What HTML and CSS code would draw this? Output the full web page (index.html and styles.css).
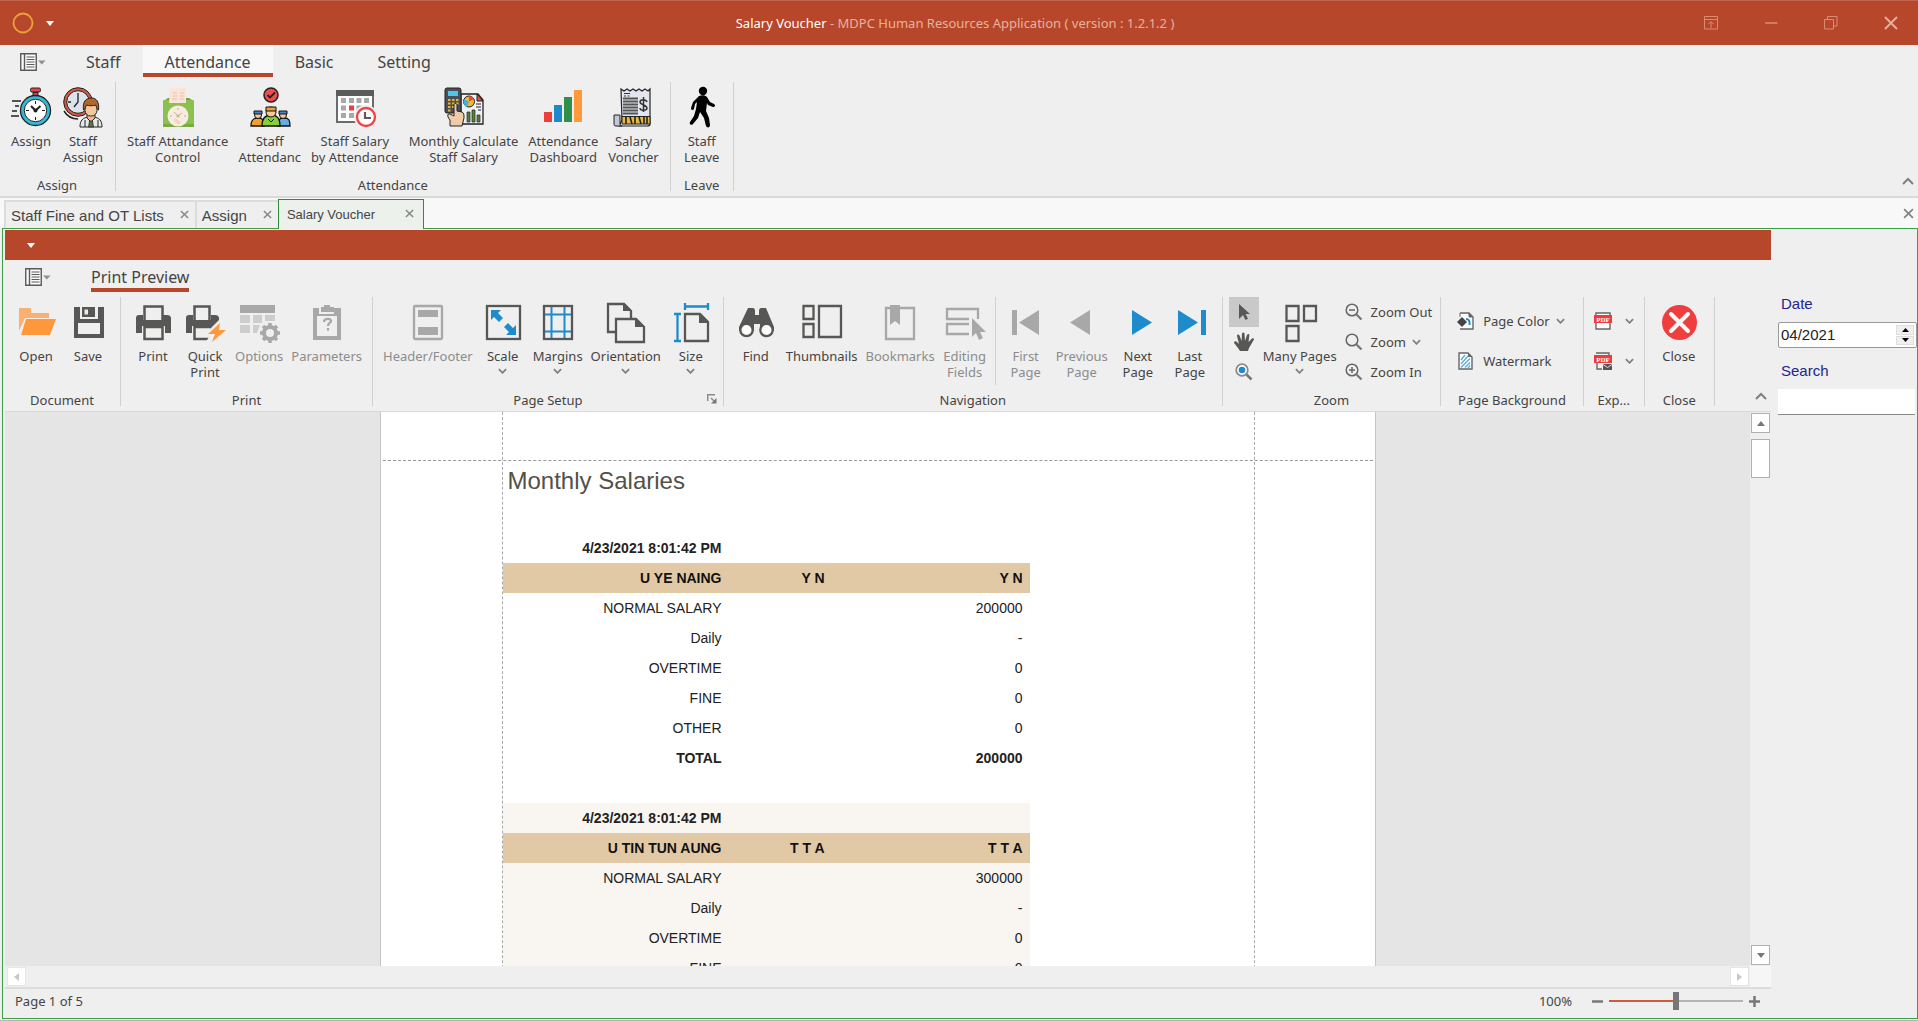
FILE: index.html
```html
<!DOCTYPE html>
<html lang="en">
<head>
<meta charset="utf-8">
<title>Salary Voucher - MDPC Human Resources Application</title>
<link rel="stylesheet" href="styles.css">
</head>
<body>
<svg class="defs" aria-hidden="true">
  <symbol id="chevron" viewBox="0 0 10 6"><path d="M1 1l4 4 4-4" fill="none" stroke="#808080" stroke-width="2"/></symbol>
  <symbol id="close" viewBox="0 0 10 10"><path d="M1 1l8 8M9 1L1 9" fill="none" stroke="#858585" stroke-width="1.6"/></symbol>
  <symbol id="caret-up" viewBox="0 0 12 8"><path d="M1 7l5-5 5 5" fill="none" stroke="#808080" stroke-width="2"/></symbol>
  <symbol id="appmenu" viewBox="0 0 26 18">
    <path d="M.75.75h15.5v16.5H.75zM4.5 1v16" fill="#fafafa" stroke="#5a5a5a" stroke-width="1.4"/>
    <path d="M6.500 4h8M6.500 6.500h8M6.500 9h8M6.500 11.500h8M6.500 14h8" stroke="#5a5a5a" stroke-width="1.2"/>
    <path d="M18 7.500h7.500l-3.750 4z" fill="#909090"/>
  </symbol>
</svg>
<div class="app">
  <header class="titlebar">
    <div class="quick">
      <svg width="22" height="22" viewBox="0 0 22 22"><circle cx="11" cy="11" r="9.500" fill="none" stroke="#e8a33a" stroke-width="1.800"/></svg>
      <svg width="8" height="5" viewBox="0 0 8 5"><path d="M0 0h8L4 5z" fill="#fff"/></svg>
    </div>
    <div class="caption-text"><b>Salary Voucher</b> - MDPC Human Resources Application ( version : 1.2.1.2 )</div>
    <div class="winbuttons">
      <button type="button" aria-label="Ribbon options"><svg width="14" height="14" viewBox="0 0 14 14"><path d="M.5.5h13v12.500H.5zM.5 3.500h13M7 12V6M4.500 8L7 5.500 9.500 8" fill="none" stroke="#d98b76"/></svg></button>
      <button type="button" aria-label="Minimize"><svg width="14" height="14" viewBox="0 0 14 14"><path d="M1 7h12.500" stroke="#d98b76" stroke-width="1.500"/></svg></button>
      <button type="button" aria-label="Restore"><svg width="14" height="14" viewBox="0 0 14 14"><path d="M.5 3.500h9v9.500h-9zM3.500 3.500V.5h9.500v9.500H9.500" fill="none" stroke="#d98b76"/></svg></button>
      <button type="button" aria-label="Close window"><svg width="14" height="14" viewBox="0 0 14 14"><path d="M1 1l12 12M13 1L1 13" stroke="#e9b0a0" stroke-width="1.800"/></svg></button>
    </div>
  </header>

  <nav class="tabs">
    <button type="button" class="appmenu" aria-label="Application menu"><svg width="26" height="18"><use href="#appmenu"/></svg></button>
    <button type="button" class="tab"><span>Staff</span></button>
    <button type="button" class="tab active"><span>Attendance</span></button>
    <button type="button" class="tab"><span>Basic</span></button>
    <button type="button" class="tab"><span>Setting</span></button>
  </nav>
  <section class="ribbon">
    <div class="group">
      <div class="items">
        <button type="button" class="big">
          <svg viewBox="0 0 40 40">
            <path d="M1 14h9M4 19h4M1 24h5M0 29h8" stroke="#222" stroke-width="1.300"/>
            <rect x="19.500" y="1" width="10" height="4" rx="1.500" fill="#e8434a" stroke="#222"/><path d="M22 5.500h5v3h-5z" fill="#e8434a" stroke="#222"/>
            <circle cx="24.500" cy="23.500" r="15" fill="#35b8d6" stroke="#222" stroke-width="1.300"/>
            <circle cx="24.500" cy="23.500" r="11.200" fill="#fff" stroke="#222"/>
            <path d="M24.500 14v3M24.500 30v3M15 23.500h3M31 23.500h3" stroke="#222"/>
            <path d="M20 19l4.500 4.500 5-4.500" fill="none" stroke="#222" stroke-width="2"/><circle cx="24.500" cy="23.500" r="2" fill="#222"/>
          </svg><span>Assign</span></button>
        <button type="button" class="big">
          <svg viewBox="0 0 40 40">
            <path d="M1 24c3 5 8 8 14 8" fill="none" stroke="#222" stroke-width="1.500"/>
            <circle cx="15" cy="15" r="14.300" fill="#d8573f" stroke="#222"/><circle cx="15" cy="15" r="11.300" fill="#dde3ec" stroke="#222"/>
            <path d="M15 6v9l-4 5M5 15h3M22 15h3" fill="none" stroke="#222" stroke-width="1.300"/>
            <path d="M17 40c0-7 3-9 8-10h6c5 1 8 3 8 10z" fill="#e6e8ee" stroke="#222"/>
            <path d="M24 26h8v5l-4 4-4-4z" fill="#e9b98f" stroke="#222"/><path d="M26.500 34h3l1 6h-5z" fill="#58733f" stroke="#222" stroke-width=".7"/>
            <rect x="22" y="15" width="12" height="14" rx="5.500" fill="#f4c79c" stroke="#222"/>
            <path d="M20.500 23c-1-8 2-12 8-12 5 0 8 4 7 12-2-1-2-4-3-5-3 1-6 1-9 0-1 2-1 4-3 5z" fill="#b0662d" stroke="#222"/>
            <path d="M22 33v7M35 33v7" stroke="#222"/>
          </svg><span>Staff<br>Assign</span></button>
      </div>
      <div class="caption">Assign</div>
    </div>
    <div class="group compact">
      <div class="items">
        <button type="button" class="big">
          <svg viewBox="0 0 40 40">
            <path d="M7 13l3-2h21l3 2z" fill="#7aa52e"/><rect x="5" y="13" width="31" height="27" rx="1" fill="#8cc152"/>
            <path d="M5 37h31v3H5z" fill="#79ab42"/>
            <path d="M12 2l2-2 3 2 3-2 3 2 3-2 2 2v14H11z" fill="#fbe3d6"/><path d="M15 6h4M22 6h4M15 9h4M22 9h4M14 12h5M22 12h4" stroke="#e9bfae"/>
            <circle cx="20" cy="29" r="10.500" fill="#f8ebdf"/>
            <path d="M20 21v2M20 35v2M12 29h2M26 29h2M16 25l4 4 4-3" fill="none" stroke="#c9b09d"/><circle cx="20" cy="29" r="1.500" fill="#c9b09d"/><path d="M17 31a3 3 0 006 4z" fill="#f2d4c0"/>
          </svg><span>Staff Attandance<br>Control</span></button>
        <button type="button" class="big">
          <svg viewBox="0 0 40 40">
            <circle cx="21" cy="8" r="7" fill="#f04d4d" stroke="#222" stroke-width="1.500"/><path d="M17.500 8l2.500 2.500L25 5.500" fill="none" stroke="#222" stroke-width="1.800"/>
            <path d="M1 39c0-6 2-8 7-8s6 2 6 8z" fill="#f6a02c" stroke="#111" stroke-width="1.300"/>
            <path d="M28 39c0-6 1-8 6-8s6 2 6 8z" fill="#63aee8" stroke="#111" stroke-width="1.300"/>
            <circle cx="8" cy="28" r="3.500" fill="#f6c89a" stroke="#111"/><path d="M4 27v-3h8v3z" fill="#4789c8" stroke="#111"/>
            <circle cx="33" cy="28" r="3.500" fill="#f6c89a" stroke="#111"/><path d="M29 27v-3h8v3z" fill="#4789c8" stroke="#111"/>
            <path d="M12 39c0-8 3-11 9-11s9 3 9 11z" fill="#86cf3d" stroke="#111" stroke-width="1.300"/>
            <circle cx="21" cy="25" r="5" fill="#f6c89a" stroke="#111"/><path d="M16 24v-4h10v4z" fill="#e8a036" stroke="#111"/><path d="M18 32l3 3 3-3" fill="none" stroke="#111"/>
          </svg><span>Staff<br>Attendanc</span></button>
        <button type="button" class="big">
          <svg viewBox="0 0 40 40">
            <rect x="2" y="4" width="36" height="31" fill="#fff" stroke="#6b6b6b" stroke-width="2"/><path d="M1 3h38v6H1z" fill="#5b5b5b"/>
            <path d="M6 11h5v5H6zM14 11h5v5h-5zM21.500 11h5v5h-5zM29 11h5v5h-5zM6 18.500h5v5H6zM21.500 18.500h5v5h-5zM6 26h5v5H6zM14 26h5v5h-5z" fill="#a8a8a8"/>
            <path d="M14 18.500h5v5h-5z" fill="#ee3b3b"/>
            <circle cx="31" cy="30" r="12" fill="#efefef"/><circle cx="31" cy="30" r="9" fill="#fff" stroke="#ee4444" stroke-width="2.300"/><path d="M30 25v6h6" fill="none" stroke="#5b5b5b" stroke-width="2.200"/>
          </svg><span>Staff Salary<br>by Attendance</span></button>
        <button type="button" class="big">
          <svg viewBox="0 0 40 40">
            <path d="M17 7h17l5 6v24H17z" fill="#f0f1f6" stroke="#222" stroke-width="1.300"/><path d="M33 7v7h6z" fill="#ee4b3a" stroke="#222"/>
            <circle cx="25" cy="14.500" r="5.500" fill="#f5b431" stroke="#222"/><path d="M25 14.500V9a5.500 5.500 0 015 3z" fill="#e54b3c"/><path d="M25 14.500l-5-2a5.500 5.500 0 003 7.500z" fill="#3bb3e0"/>
            <path d="M32 17h5M32 20h5M34 23h3" stroke="#222"/>
            <path d="M23 25h3v10h-3zM28 23h3v12h-3zM33 28h3v7h-3z" fill="#5d8038" stroke="#222" stroke-width=".7"/>
            <rect x="1" y="1" width="16" height="25" rx="2" fill="#4b4e56" stroke="#222"/><path d="M4 4h10v5H4z" fill="#4cc6ee"/>
            <path d="M4 13h2.500M8 13h2.500M12 13h2.500M4 16.500h2.500M8 16.500h2.500M12 16.500h2.500M4 20h2.500M8 20h2.500M4 23.500h2.500" stroke="#e2b63a" stroke-width="2"/>
            <path d="M6 39v-6c-3-3-3-7 0-6l4 2V18c0-2 3-2 3 0v6l5 1c2 1 2 3 2 6l-2 8z" fill="#f0cbaa" stroke="#222"/>
          </svg><span>Monthly Calculate<br>Staff Salary</span></button>
        <button type="button" class="big">
          <svg viewBox="0 0 40 40"><path d="M1 25h8v10H1z" fill="#ee3e3a"/><path d="M11 18h8v17h-8z" fill="#1e88cc"/><path d="M21 10h8v25h-8z" fill="#2f9149"/><path d="M31 3h8v32h-8z" fill="#ff993c"/></svg><span>Attendance<br>Dashboard</span></button>
        <button type="button" class="big">
          <svg viewBox="0 0 40 40">
            <path d="M8 2l3 2 3-2 3 2 3-2 3 2 3-2 3 2 3-2 3 2 2-2v35c0 2-1 2-3 2H6l3-6z" fill="#e3e6ef" stroke="#222" stroke-width="1.200"/>
            <path d="M11 9h2M14.500 9h2M11 6.500h6" stroke="#333"/>
            <path d="M10 11.500h15M10 14.500h15M10 17.500h15M10 20.500h15M10 23.500h15M10 26.500h15" stroke="#555" stroke-width="1.800"/>
            <path d="M34 15c-1-3-7-3-7 0s7 3 7 6-7 3-7 0M30.500 10v15" fill="none" stroke="#333" stroke-width="1.500"/>
            <path d="M9 29.500h28V37H9z" fill="#e6b93c" stroke="#222"/><path d="M13 30v7M17 30l2 7M22 30v7M26 30l2 7M31 30v7M34 30v7" stroke="#222" stroke-width="1.600"/>
            <path d="M1 28h6v9c0 2 2 2 2 2H3c-2 0-2-1-2-3z" fill="#c3c8d8" stroke="#222"/>
          </svg><span>Salary<br>Voncher</span></button>
      </div>
      <div class="caption">Attendance</div>
    </div>
    <div class="group compact">
      <div class="items">
        <button type="button" class="big">
          <svg viewBox="0 0 40 40"><circle cx="21" cy="4" r="4.200"/><path d="M17 9c3-1 6-1 8 1l3 5 4 2c2 1 1 3-1 3l-5-2-1-2-1 8 3 7 1 7c0 3-3 3-4 1l-2-8-4-6-2 6-5 6c-2 2-4 0-3-2l4-6 2-7 1-7-2 2-1 5c-1 2-3 1-3-1l2-6z"/></svg><span>Staff<br>Leave</span></button>
      </div>
      <div class="caption">Leave</div>
    </div>
    <button type="button" class="collapse" aria-label="Collapse ribbon"><svg width="12" height="8"><use href="#caret-up"/></svg></button>
  </section>

  <nav class="doctabs">
    <button type="button" class="doctab">Staff Fine and OT Lists<svg width="9" height="9"><use href="#close"/></svg></button>
    <button type="button" class="doctab">Assign<svg width="9" height="9"><use href="#close"/></svg></button>
    <button type="button" class="doctab current">Salary Voucher<svg width="9" height="9"><use href="#close"/></svg></button>
    <button type="button" class="closeall" aria-label="Close tab"><svg width="11" height="11"><use href="#close"/></svg></button>
  </nav>

  <main class="frame">
    <div class="preview">
      <div class="redbar"><svg width="8" height="5" viewBox="0 0 8 5"><path d="M0 0h8L4 5z" fill="#fff"/></svg></div>
      <nav class="tabs">
        <button type="button" class="appmenu" aria-label="Print menu"><svg width="26" height="18"><use href="#appmenu"/></svg></button>
        <button type="button" class="tab underlined"><span>Print Preview</span></button>
      </nav>
      <section class="ribbon print">
        <div class="group">
          <div class="items">
            <button type="button" class="big"><svg viewBox="0 0 40 40"><path d="M3 6h12v5h18v5H9L3 29z" fill="#f9b070"/><path d="M10 17h30l-6 16H5z" fill="#ff983a"/></svg><span>Open</span></button>
            <button type="button" class="big"><svg viewBox="0 0 40 40"><path fill-rule="evenodd" d="M6 5h6v12h18V5h6v31H6zM10 21v11h22V21z" fill="#575755"/><path fill-rule="evenodd" d="M14 5h13v10H14zM16.500 7.500v5H20v-5z" fill="#575755"/></svg><span>Save</span></button>
          </div>
          <div class="caption">Document</div>
        </div>
        <div class="group">
          <div class="items">
            <button type="button" class="big"><svg viewBox="0 0 40 40"><path d="M3 16c0-2 1-3 3-3h4v5h20v-5h4c2 0 4 1 4 3v15H3z" fill="#575755"/><path d="M11.500 18V4.500h18V18" fill="#efefef" stroke="#575755" stroke-width="2.500"/><path d="M9 24h23v8H9z" fill="#efefef"/><path d="M11.500 25h18v12h-18z" fill="#efefef" stroke="#575755" stroke-width="2.500"/></svg><span>Print</span></button>
            <button type="button" class="big"><svg viewBox="0 0 40 40"><path d="M1 16c0-2 1-3 3-3h4v5h18v-5h4c2 0 4 1 4 3v15H1z" fill="#575755"/><path d="M9.500 18V4.500h15V18" fill="#efefef" stroke="#575755" stroke-width="2.500"/><path d="M7 24h20v8H7z" fill="#efefef"/><path d="M9.500 25h17v12h-17z" fill="#efefef" stroke="#575755" stroke-width="2.500"/><path d="M35 17L19 33h6l-4 7h9l12-14h-7z" fill="#efefef"/><path d="M35 21L23 32h7l-3 8 14-12h-7z" fill="#ff983a"/></svg><span>Quick<br>Print</span></button>
            <button type="button" class="big off"><svg viewBox="0 0 40 40"><path d="M1 3h35v8H1z" fill="#a8a8a8"/><path d="M1 13h10v8H1zM14 13h9v8h-9zM26 13h10v6H26zM1 23h10v8H1zM14 23h7l-3 8h-4z" fill="#cdcdcd"/><circle cx="31" cy="31" r="6" fill="none" stroke="#a8a8a8" stroke-width="4"/><path d="M31 21v4M31 37v4M21 31h4M37 31h4M24 24l3 3M35 35l3 3M38 24l-3 3M27 35l-3 3" stroke="#a8a8a8" stroke-width="3.500"/></svg><span>Options</span></button>
            <button type="button" class="big off"><svg viewBox="0 0 40 40"><path fill-rule="evenodd" d="M6 6h6v6h15V6h7v32H6zM10 14v20h20V14z" fill="#a8a8a8"/><path d="M14 5h3V3h6v2h4v5H14z" fill="#a8a8a8"/><path d="M17 20c0-4 7-4 7-1 0 2-3 2-3 5M21 26v2.500" fill="none" stroke="#a8a8a8" stroke-width="2.300"/></svg><span>Parameters</span></button>
          </div>
          <div class="caption">Print</div>
        </div>
        <div class="group">
          <div class="items">
            <button type="button" class="big off"><svg viewBox="0 0 40 40"><rect x="6" y="4" width="28" height="33" rx="1" fill="none" stroke="#a8a8a8" stroke-width="2.300"/><path d="M10 8h20v7H10zM10 25h20v8H10z" fill="#a8a8a8"/></svg><span>Header/Footer</span></button>
            <button type="button" class="big"><svg viewBox="0 0 40 40"><rect x="4" y="4" width="33" height="33" fill="none" stroke="#575755" stroke-width="2.300"/><path d="M8 8h10l-3 3 5 5-4 4-5-5-3 3zM33 33H23l3-3-5-5 4-4 5 5 3-3z" fill="#1e8bcd"/></svg><span>Scale</span><svg class="drop"><use href="#chevron"/></svg></button>
            <button type="button" class="big"><svg viewBox="0 0 40 40"><path d="M13.500 5v32M26.500 5v32M7 12.500h27M7 29.500h27" stroke="#1e8bcd" stroke-width="2"/><rect x="6" y="4" width="28" height="33" fill="none" stroke="#575755" stroke-width="2.300"/></svg><span>Margins</span><svg class="drop"><use href="#chevron"/></svg></button>
            <button type="button" class="big"><svg viewBox="0 0 40 40"><path d="M10 30H2V2h16l7 7v9" fill="none" stroke="#575755" stroke-width="2.300"/><path d="M17 1v8h9z" fill="#575755"/><path d="M10 17h20l8 8v15H10z" fill="#efefef" stroke="#575755" stroke-width="2.300"/><path d="M29 16v9h9z" fill="#575755"/></svg><span>Orientation</span><svg class="drop"><use href="#chevron"/></svg></button>
            <button type="button" class="big"><svg viewBox="0 0 40 40"><path d="M14 12h15l8 8v19H14z" fill="none" stroke="#575755" stroke-width="2.300"/><path d="M28 11v10h10z" fill="#575755"/><path d="M14 4.500h23M14 1v7M37 1v7M6.500 12v27M3 12h7M3 39h7" stroke="#1e8bcd" stroke-width="2.300"/></svg><span>Size</span><svg class="drop"><use href="#chevron"/></svg></button>
          </div>
          <div class="caption">Page Setup<button type="button" class="launcher" aria-label="Page Setup dialog"><svg width="10" height="10" viewBox="0 0 10 10"><path d="M.7 7V.7H8M4 4l4 4" fill="none" stroke="#888" stroke-width="1.400"/><path d="M9.500 4v5.500H4z" fill="#777"/></svg></button></div>
        </div>
        <div class="group">
          <div class="items">
            <button type="button" class="big"><svg viewBox="0 0 40 40"><path d="M12 6h5c1 0 2 1 2 3v4h4V9c0-2 1-3 2-3h5l8 19v4H24v-7h-6v7H3v-4z" fill="#575755"/><circle cx="10.500" cy="28" r="6.200" fill="#fff" stroke="#575755" stroke-width="2.300"/><circle cx="30.500" cy="28" r="6.200" fill="#fff" stroke="#575755" stroke-width="2.300"/></svg><span>Find</span></button>
            <button type="button" class="big"><svg viewBox="0 0 40 40"><path d="M1.500 4h10v13h-10zM1.500 22h10v13h-10zM17 4h22v31H17z" fill="none" stroke="#575755" stroke-width="2.300"/></svg><span>Thumbnails</span></button>
            <button type="button" class="big off"><svg viewBox="0 0 40 40"><path d="M6 6h28v31H6z" fill="none" stroke="#a8a8a8" stroke-width="2.300"/><path d="M10 3h10v20l-5-4-5 4z" fill="#a8a8a8"/></svg><span>Bookmarks</span></button>
            <button type="button" class="big off"><svg viewBox="0 0 40 40"><path d="M33 17V7H2v10h22M24 22H2v10h22" fill="none" stroke="#a8a8a8" stroke-width="2.300"/><path d="M27 16v19l4-4 3 7 4-2-3-6h6z" fill="#a8a8a8"/></svg><span>Editing<br>Fields</span></button>
            <i class="minisep"></i>
            <button type="button" class="big off"><svg viewBox="0 0 40 40"><path d="M6 8h5v25H6zM33 8v25L13 20.500z" fill="#a8a8a8"/></svg><span>First<br>Page</span></button>
            <button type="button" class="big off"><svg viewBox="0 0 40 40"><path d="M28 8v25L8 20.500z" fill="#a8a8a8"/></svg><span>Previous<br>Page</span></button>
            <button type="button" class="big"><svg viewBox="0 0 40 40"><path d="M14 8v25l20-12.500z" fill="#1e8bcd"/></svg><span>Next<br>Page</span></button>
            <button type="button" class="big"><svg viewBox="0 0 40 40"><path d="M8 8v25l20-12.500zM31 8h5v25h-5z" fill="#1e8bcd"/></svg><span>Last<br>Page</span></button>
          </div>
          <div class="caption">Navigation</div>
        </div>
        <div class="group">
          <div class="items">
            <div class="tools">
              <button type="button" class="pressed" aria-label="Pointer"><svg width="20" height="20" viewBox="0 0 20 20"><path d="M5 2v15l4-4 2.500 5 2.500-1.200L11.500 12H16z" fill="#575755"/></svg></button>
              <button type="button" aria-label="Hand tool"><svg width="20" height="20" viewBox="0 0 20 20"><path d="M6 19c-2-3-4-6-6-8 0-2 2-2 3-1l2 2L3 4c0-2 2-2 2.500-.5L7.500 9 8 1.500c.5-1.500 2.200-1.500 2.500 0L11 9l2-6c1-1.500 2.500-1 2.300.7L14.500 10 18 6.500c1.500-1 2.500.5 1.700 1.500L15 16l-1 3z" fill="#575755"/></svg></button>
              <button type="button" aria-label="Magnifier"><svg width="18" height="18" viewBox="0 0 18 18"><circle cx="7" cy="7" r="5.800" fill="#fff" stroke="#8a8a8a" stroke-width="1.800"/><circle cx="7" cy="7" r="3.300" fill="#1e8bcd"/><path d="M11.500 11.500l5 5" stroke="#777" stroke-width="2.500"/></svg></button>
            </div>
            <button type="button" class="big"><svg viewBox="0 0 40 40"><path d="M6.500 4h12v15h-12zM24 4h12v15H24zM6.500 24h12v15h-12z" fill="none" stroke="#575755" stroke-width="2.300"/></svg><span>Many Pages</span><svg class="drop"><use href="#chevron"/></svg></button>
            <div class="rows three">
              <button type="button"><svg width="18" height="18" viewBox="0 0 18 18"><circle cx="7" cy="7" r="5.800" fill="none" stroke="#666" stroke-width="1.500"/><path d="M4 7h6" stroke="#666" stroke-width="1.500"/><path d="M11.500 11.500l5 5" stroke="#777" stroke-width="2.200"/></svg>Zoom Out</button>
              <button type="button"><svg width="18" height="18" viewBox="0 0 18 18"><circle cx="7" cy="7" r="5.800" fill="none" stroke="#666" stroke-width="1.500"/><path d="M11.500 11.500l5 5" stroke="#777" stroke-width="2.200"/></svg>Zoom<svg class="drop"><use href="#chevron"/></svg></button>
              <button type="button"><svg width="18" height="18" viewBox="0 0 18 18"><circle cx="7" cy="7" r="5.800" fill="none" stroke="#666" stroke-width="1.500"/><path d="M4 7h6M7 4v6" stroke="#666" stroke-width="1.500"/><path d="M11.500 11.500l5 5" stroke="#777" stroke-width="2.200"/></svg>Zoom In</button>
            </div>
          </div>
          <div class="caption">Zoom</div>
        </div>
        <div class="group">
          <div class="items wide">
            <div class="rows">
              <button type="button"><svg width="18" height="18" viewBox="0 0 18 18"><path d="M3 1h9l4 4v12H3" fill="#fff" stroke="#666" stroke-width="1.400"/><path d="M3 1v4M12 1v4h4z" fill="#666" stroke="#666"/><path d="M5 5l5 5-5 5-5-5z" fill="#444"/><path d="M9 7c3 0 4 2 3.500 6" fill="none" stroke="#1e8bcd" stroke-width="2"/></svg>Page Color<svg class="drop"><use href="#chevron"/></svg></button>
              <button type="button"><svg width="18" height="18" viewBox="0 0 18 18"><path d="M2 1h9l4 4v12H2z" fill="#fff" stroke="#666" stroke-width="1.400"/><path d="M11 1v4h4z" fill="#666"/><path d="M4 8l4-5M4 12l7-8M4 15.500l9-9M8 15.500l5-5M11 16l2-2.500" stroke="#59aadb" stroke-width="1.300"/></svg>Watermark</button>
            </div>
          </div>
          <div class="caption">Page Background</div>
        </div>
        <div class="group">
          <div class="items export">
            <div class="rows">
              <button type="button" aria-label="Export to PDF"><svg width="18" height="18" viewBox="0 0 18 18"><path d="M2 1h14v16H2z" fill="#fff" stroke="#666" stroke-width="1.400"/><path d="M0 3h18v8H0z" fill="#ee3b3b"/><text x="9" y="9.800" text-anchor="middle" class="pdf">PDF</text></svg><svg class="drop"><use href="#chevron"/></svg></button>
              <button type="button" aria-label="Send as PDF"><svg width="18" height="18" viewBox="0 0 18 18"><path d="M2 1h13v9M3 10v7h5" fill="none" stroke="#666" stroke-width="1.400"/><path d="M0 3h18v8H0z" fill="#ee3b3b"/><text x="9" y="9.800" text-anchor="middle" class="pdf">PDF</text><path d="M9 12h9v6H9z" fill="#555"/><path d="M9 12.500l4.500 3 4.500-3" fill="none" stroke="#ddd"/></svg><svg class="drop"><use href="#chevron"/></svg></button>
            </div>
          </div>
          <div class="caption">Exp...</div>
        </div>
        <div class="group">
          <div class="items narrow">
            <button type="button" class="big"><svg viewBox="0 0 40 40"><circle cx="20.500" cy="20.500" r="17.500" fill="#ef3e3b"/><path d="M12 12l17 17M29 12L12 29" stroke="#fff" stroke-width="4" stroke-linecap="round"/></svg><span>Close</span></button>
          </div>
          <div class="caption">Close</div>
        </div>
        <button type="button" class="collapse" aria-label="Collapse print ribbon"><svg width="12" height="8"><use href="#caret-up"/></svg></button>
      </section>

      <div class="viewer">
        <div class="canvas">
          <article class="page">
            <h1>Monthly Salaries</h1>
            <table class="voucher">
              <tr class="strong"><td>4/23/2021 8:01:42 PM</td><td></td><td></td></tr>
              <tr class="head"><th>U YE NAING</th><th>Y N</th><th>Y N</th></tr>
              <tr><td>NORMAL SALARY</td><td></td><td>200000</td></tr>
              <tr><td>Daily</td><td></td><td>-</td></tr>
              <tr><td>OVERTIME</td><td></td><td>0</td></tr>
              <tr><td>FINE</td><td></td><td>0</td></tr>
              <tr><td>OTHER</td><td></td><td>0</td></tr>
              <tr class="strong"><td>TOTAL</td><td></td><td>200000</td></tr>
            </table>
            <table class="voucher tinted">
              <tr class="strong"><td>4/23/2021 8:01:42 PM</td><td></td><td></td></tr>
              <tr class="head"><th>U TIN TUN AUNG</th><th>T T A</th><th>T T A</th></tr>
              <tr><td>NORMAL SALARY</td><td></td><td>300000</td></tr>
              <tr><td>Daily</td><td></td><td>-</td></tr>
              <tr><td>OVERTIME</td><td></td><td>0</td></tr>
              <tr><td>FINE</td><td></td><td>0</td></tr>
            </table>
          </article>
        </div>
        <div class="vscroll">
          <button type="button" aria-label="Scroll up"><svg width="8" height="5" viewBox="0 0 8 5"><path d="M4 0l4 5H0z" fill="#777"/></svg></button>
          <div class="vthumb"></div>
          <button type="button" class="end" aria-label="Scroll down"><svg width="8" height="5" viewBox="0 0 8 5"><path d="M0 0h8L4 5z" fill="#777"/></svg></button>
        </div>
      </div>
      <div class="hscroll">
        <button type="button" aria-label="Scroll left" disabled><svg width="5" height="8" viewBox="0 0 5 8"><path d="M5 0v8L0 4z" fill="#c8c8c8"/></svg></button>
        <button type="button" class="end" aria-label="Scroll right" disabled><svg width="5" height="8" viewBox="0 0 5 8"><path d="M0 0v8l5-4z" fill="#c8c8c8"/></svg></button>
        <div class="corner"></div>
      </div>
      <footer class="status">
        <span>Page 1 of 5</span>
        <label for="zoom">100%</label>
        <button type="button" aria-label="Decrease zoom"><svg width="11" height="11" viewBox="0 0 11 11"><path d="M0 5.500h11" stroke="#777" stroke-width="2.500"/></svg></button>
        <input type="range" id="zoom" min="0" max="100" value="50">
        <button type="button" aria-label="Increase zoom"><svg width="11" height="11" viewBox="0 0 11 11"><path d="M0 5.500h11M5.500 0v11" stroke="#777" stroke-width="2.500"/></svg></button>
      </footer>
    </div>

    <aside class="filters">
      <label for="date">Date</label>
      <div class="spin">
        <input type="text" id="date" value="04/2021">
        <div class="spinbuttons">
          <button type="button" aria-label="Next month"><svg width="7" height="4" viewBox="0 0 7 4"><path d="M3.500 0L7 4H0z"/></svg></button>
          <button type="button" aria-label="Previous month"><svg width="7" height="4" viewBox="0 0 7 4"><path d="M0 0h7L3.500 4z"/></svg></button>
        </div>
      </div>
      <label for="search">Search</label>
      <input type="text" id="search" class="search">
    </aside>
  </main>
</div>
</body>
</html>
```
FILE: styles.css
```css
* { box-sizing: border-box; }
body {
  margin: 0;
  background: #efefef;
  color: #444;
  font: 13px/16px "Noto Sans", Tahoma, sans-serif;
}
button {
  margin: 0;
  padding: 0;
  border: 0;
  background: none;
  color: inherit;
  font: inherit;
}
svg { display: block; flex: none; }
.defs { position: absolute; width: 0; height: 0; }
.app {
  display: flex;
  flex-direction: column;
  height: 100vh;
  border-bottom: 1px solid #b5b5b5;
}

/* title bar */
.titlebar {
  display: grid;
  grid-template-columns: 1fr auto 1fr;
  align-items: center;
  flex: none;
  height: 45px;
  padding: 0 20px 0 12px;
  background: #b7472a;
  border-top: 1px solid #c0634b;
}
.quick { display: flex; align-items: center; gap: 12px; }
.caption-text { color: #e9b19f; }
.caption-text b { color: #fff; font-weight: 400; }
.winbuttons { display: flex; justify-content: flex-end; gap: 46px; }

/* ribbon tabs */
.tabs {
  display: flex;
  flex: none;
  height: 33px;
  padding-left: 20px;
  font-size: 16px;
}
.appmenu { width: 44px; }
.tab { display: flex; padding: 0 22px; }
.tab span {
  display: flex;
  align-items: center;
  height: 32px;
  padding-top: 5px;
  border-bottom: 4px solid transparent;
}
.tab.active { background: #f8f8f8; border-bottom: 4px solid #b7472a; margin-bottom: 1px; }
.tab.active span { border-bottom: 0; height: 28px; padding-top: 5px; }
.tab.underlined span { border-color: #b7472a; }

/* ribbon */
.ribbon {
  display: flex;
  flex: none;
  padding: 4px 0 5px;
  border-bottom: 2px solid #dadada;
}
.ribbon.print { border-bottom-width: 1px; }
.group {
  display: flex;
  flex-direction: column;
  height: 109px;
  padding: 0 6px;
  border-right: 1px solid #d0d0d0;
}
.group:first-child { padding-left: 5px; }
.items { display: flex; flex: 1; }
.caption {
  position: relative;
  height: 16px;
  line-height: 20px;
  text-align: center;
}
.launcher { position: absolute; right: 0; top: 4px; }
.big {
  display: flex;
  flex-direction: column;
  align-items: center;
  min-width: 52px;
  padding: 5px 5px 0;
  white-space: nowrap;
}
.compact .big { min-width: 50px; }
.print .big { padding: 5px 4px 0; }
.big > svg:first-child { width: 40px; height: 40px; margin-bottom: 6px; overflow: visible; }
.off { color: #8c8c8c; }
.drop { width: 9px; height: 6px; }
.big .drop { margin-top: 4px; }
.minisep { width: 1px; height: 88px; margin: 0 4px; background: #d0d0d0; }
.collapse { align-self: flex-end; margin: 0 4px 6px auto; }

.tools { display: flex; flex-direction: column; }
.tools button { display: grid; place-items: center; width: 30px; height: 30px; }
.tools .pressed { background: #c9c9c9; }
.rows { display: flex; flex-direction: column; padding: 4px 4px 0; }
.rows button { display: flex; align-items: center; gap: 8px; height: 40px; }
.rows.three { padding: 0 2px 0 4px; }
.rows.three button { height: 30px; }
.rows .drop { margin-left: -2px; }
.wide { padding: 0 8px 0 6px; }
.export .drop { margin-left: 5px; }
.narrow { padding: 0 3px 0 2px; }
.pdf { font: bold 7px "Liberation Serif", serif; fill: #fff; }

/* document tabs */
.doctabs {
  display: flex;
  align-items: flex-end;
  flex: none;
  height: 30px;
  padding: 0 4px;
  background: #f8f8f8;
  font: 15px/18px "Liberation Sans", Arial, sans-serif;
}
.doctab {
  display: flex;
  align-items: center;
  gap: 16px;
  height: 28px;
  padding: 1px 6px 0 5px;
  background: #efefef;
  border: 2px solid #dcdcdc;
  border-width: 2px 0 0 2px;
}
.doctab svg { margin-bottom: 2px; }
.current {
  position: relative;
  gap: 30px;
  height: 30px;
  margin-bottom: -1px;
  padding: 0 9px 0 8px;
  background: #ecf1ec;
  border: 1px solid #2c8f37;
  border-bottom: 0;
  font-size: 13px;
}
.closeall { margin: 0 0 9px auto; }

/* document frame */
.frame {
  display: flex;
  flex: 1;
  min-height: 0;
  margin: 0 0 1px 2px;
  padding: 1px 0 0 2px;
  border: 1px solid #3f9f48;
}
.preview { display: flex; flex-direction: column; flex: 1; min-width: 0; }
.redbar {
  display: flex;
  align-items: center;
  flex: none;
  height: 30px;
  padding-left: 22px;
  background: #b7472a;
}
.viewer { display: flex; flex: 1; min-height: 0; }
.canvas {
  display: flex;
  justify-content: center;
  align-items: flex-start;
  flex: 1;
  overflow: hidden;
  background: #e5e5e5;
}
.page {
  position: relative;
  width: 996px;
  padding: 48px 0 0 122px;
  background: #fff;
  border: 1px solid #c6c6c6;
  border-width: 0 1px;
  color: #222;
  font: 14px/16px "Liberation Sans", Arial, sans-serif;
}
/* print margin guides drawn over the sheet */
.page::before {
  content: "";
  position: absolute;
  inset: 0 120px 0 121px;
  border: 1px dashed #a9a9a9;
  border-width: 0 1px;
}
.page::after {
  content: "";
  position: absolute;
  inset: 48px 2px auto;
  border-top: 1px dashed #999;
}
.page h1 {
  margin: 0 0 31px;
  padding-left: 5px;
  color: #555046;
  font-size: 24px;
  font-weight: 400;
  line-height: 42px;
}
.voucher { width: 527px; margin-bottom: 30px; border-collapse: collapse; table-layout: fixed; }
.voucher td, .voucher th { height: 30px; padding: 0 7px; text-align: right; }
.voucher td:nth-child(2), .voucher th:nth-child(2) { width: 103px; }
.voucher td:first-child, .voucher th:first-child { width: 226px; }
.strong { font-weight: 700; }
.head { background: #e2c9a5; color: #111; }
.tinted { background: #f9f5f0; }

.vscroll { display: flex; flex-direction: column; width: 21px; padding: 1px; }
.vscroll button, .vthumb {
  display: grid;
  place-items: center;
  width: 19px;
  height: 20px;
  background: #fff;
  border: 1px solid #b0b0b0;
}
.vthumb { height: 39px; margin-top: 6px; }
.vscroll .end { margin-top: auto; }
.hscroll { display: flex; align-items: center; flex: none; height: 21px; padding-left: 2px; }
.hscroll button {
  display: grid;
  place-items: center;
  width: 19px;
  height: 19px;
  background: #fff;
  border: 1px solid #e4e4e4;
}
.hscroll .end { margin-left: auto; }
.corner { align-self: stretch; width: 21px; margin-left: 1px; background: #f6f6f6; }
.status {
  display: flex;
  align-items: center;
  flex: none;
  height: 31px;
  padding: 0 11px 5px 10px;
  border-top: 2px solid #dcdcdc;
}
.status label { margin: 0 20px 0 auto; }
.status input {
  width: 134px;
  height: 20px;
  margin: 0 6px;
  appearance: none;
  background: linear-gradient(90deg, #cf5a3e 50%, #b5b5b5 50%) center / 100% 2px no-repeat;
}
.status input::-webkit-slider-thumb {
  appearance: none;
  width: 6px;
  height: 18px;
  background: #777;
}

/* filters */
.filters {
  flex: none;
  width: 146px;
  padding: 65px 0 0 7px;
  color: #23238e;
  font: 15px/18px "Liberation Sans", Arial, sans-serif;
}
.filters label { display: block; padding-left: 3px; }
.spin {
  display: flex;
  height: 26px;
  margin: 9px 0 14px;
  padding: 1px;
  background: #fff;
  border: 1px solid #999;
  border-radius: 2px;
}
.spin input, .search { flex: 1; min-width: 0; border: 0; font: inherit; padding: 0 1px; color: #222; }
.spinbuttons { display: flex; flex-direction: column; gap: 1px; padding: 1px; }
.spinbuttons button {
  display: grid;
  place-items: center;
  flex: 1;
  width: 18px;
  background: #efefef;
  border: 1px solid #dedede;
}
.search { width: 137px; height: 26px; margin-top: 9px; background: #fff; border-bottom: 1px solid #8a8a8a; }
```
